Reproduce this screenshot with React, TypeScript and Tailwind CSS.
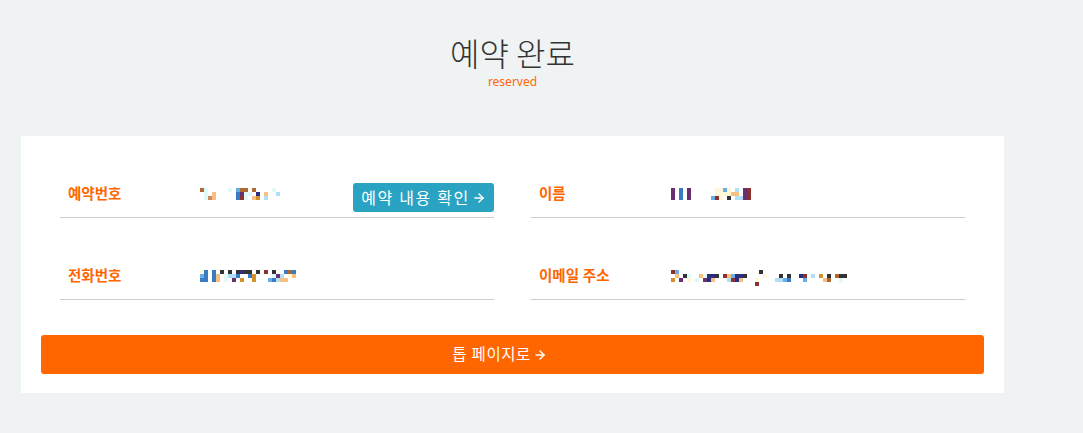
import { ArrowRight } from "lucide-react";

const PALETTE: Record<string, string> = {
  a: "#b06a30",
  c: "#e0fafa",
  b: "#6aaee8",
  B: "#3a7cc4",
  p: "#6a2f70",
  n: "#2e2e80",
  k: "#333333",
  r: "#8c3030",
  y: "#fff8d8",
  o: "#d4902c",
  q: "#f5c080",
  s: "#d08a60",
  l: "#b0e0f8",
};

// redacted values, drawn as the mosaic blocks seen in the screenshot
const NUMBER = [
  "ac.....c.baa.a....c.",
  ".c.q.....Bpcc.n.q..l",
  ".csq.....Brc.qo.l...",
];
const PHONE = [
  "yB.B.k.k.knkk.k.r.k..BaB",
  "bB.Bq.cllB..Bo....cpl.yq",
  "BB.Bq.c.p.o..o...bBlqq..",
];
const NAME = [
  "p.B.p......yyby.l.pr",
  "p.B.p......yyyyqq.pr",
  "p.B.p.....bry.k.llpr",
];
const EMAIL = [
  "rb....................k...................",
  ".q.kc..qcnnk.rqbnnk....y...k.k..nr.l.o.k.akk",
  "o.p.y.c.pnq...lrnq...y....llbB...b....qa..c",
  ".....................r....................",
];

function Mosaic({ rows }: { rows: string[] }) {
  return (
    <div className="flex flex-col h-3 overflow-visible">
      {rows.map((row, i) => (
        <div key={i} className="flex h-1 shrink-0">
          {row.split("").map((ch, j) => (
            <span
              key={j}
              className="w-1 h-1 shrink-0"
              style={{ backgroundColor: PALETTE[ch] ?? "transparent" }}
            />
          ))}
        </div>
      ))}
    </div>
  );
}

function Field({
  label,
  rows,
  children,
}: {
  label: string;
  rows: string[];
  children?: React.ReactNode;
}) {
  return (
    <div className="flex items-center h-[47px] border-b border-[#cccccc]">
      <div className="w-[140px] pl-2 text-[14.5px] font-semibold text-[#ff6600]">{label}</div>
      <div className="flex-1">
        <Mosaic rows={rows} />
      </div>
      {children}
    </div>
  );
}

export default function App() {
  return (
    <div
      className="min-h-[433px] bg-[#f0f3f4] pt-[33px] pb-10"
      style={{ fontFamily: '"Noto Sans", "Noto Sans CJK KR", sans-serif' }}
    >
      <div className="ml-[21px] w-[983px] flex flex-col items-center">
        <h1
          className="text-[32px] leading-[38px] font-light text-[#333333]"
          style={{ fontFamily: '"Noto Sans CJK KR", sans-serif' }}
        >
          예약 완료
        </h1>
        <p className="text-[12px] leading-4 text-[#ff6600] mt-[3px]">reserved</p>
      </div>

      <div className="mt-[46px] ml-[21px] w-[983px] bg-white pt-[35px] pb-[19px]">
        <div className="grid grid-cols-2 gap-x-[37px] gap-y-[35px] px-[39px]">
          <Field label="예약번호" rows={NUMBER}>
            <button className="mt-[7px] h-[29px] w-[141px] flex items-center justify-center gap-[2px] rounded-[3px] bg-[#2aa3c3] text-white text-[16px] tracking-[1.5px]">
              예약 내용 확인
              <ArrowRight className="w-[14px] h-[14px]" strokeWidth={2.5} />
            </button>
          </Field>
          <Field label="이름" rows={NAME} />
          <Field label="전화번호" rows={PHONE} />
          <Field label="이메일 주소" rows={EMAIL} />
        </div>

        <div className="px-5 mt-[35px]">
          <button className="w-full h-[39px] flex items-center justify-center gap-[2px] rounded-[3px] bg-[#ff6600] text-white text-[15.5px] tracking-[0.5px] pr-[26px]">
            톱 페이지로
            <ArrowRight className="w-[14px] h-[14px]" strokeWidth={2.5} />
          </button>
        </div>
      </div>
    </div>
  );
}
